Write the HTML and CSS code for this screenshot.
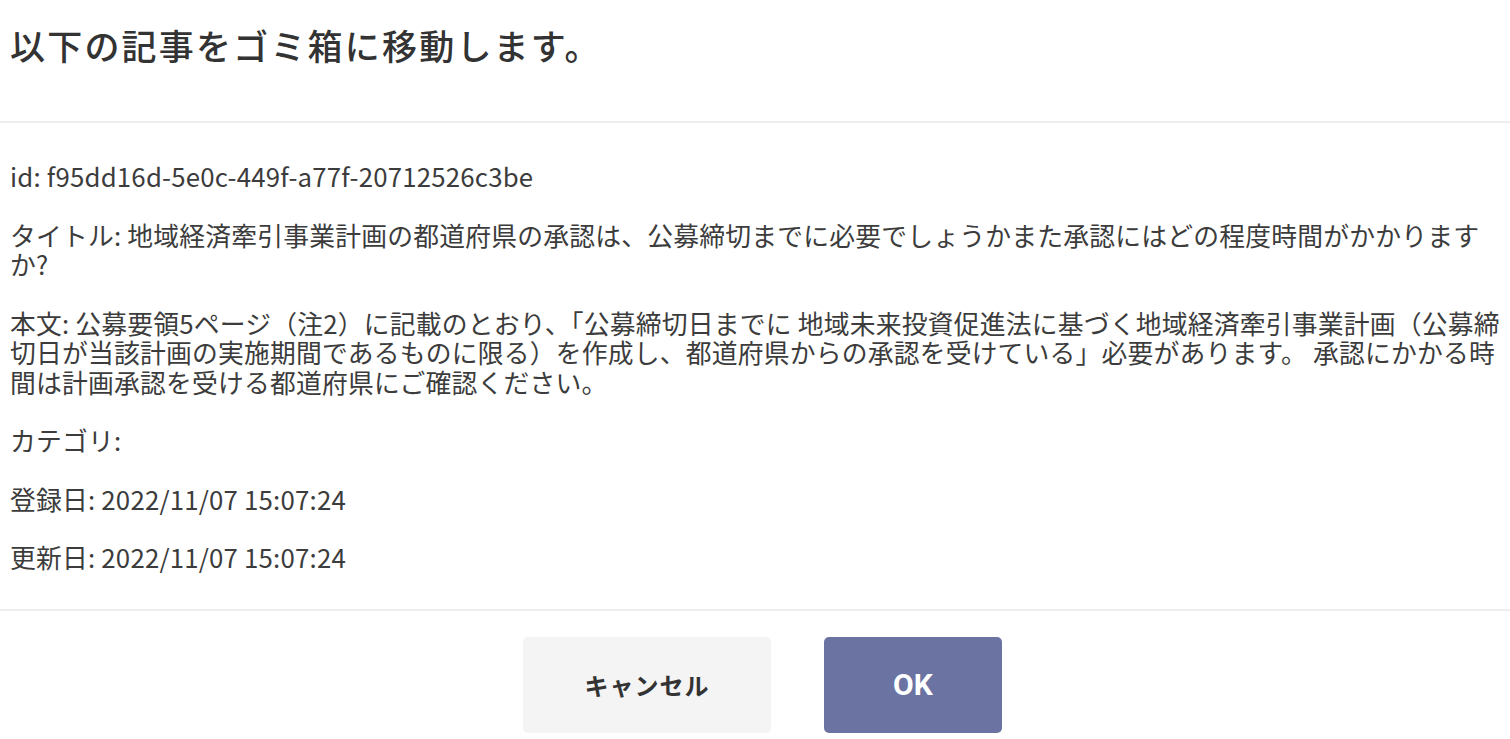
FILE: index.html
```html
<!DOCTYPE html>
<html lang="ja">
<head>
<meta charset="utf-8">
<title>ゴミ箱に移動</title>
<link rel="stylesheet" href="styles.css">
</head>
<body>
<div class="dialog">
  <header class="dialog-header">
    <h1 class="dialog-title">以下の記事をゴミ箱に移動します。</h1>
  </header>
  <section class="dialog-body">
    <p>id: f95dd16d-5e0c-449f-a77f-20712526c3be</p>
    <p>タイトル: 地域経済牽引事業計画の都道府県の承認は、公募締切までに必要でしょうかまた承認にはどの程度時間がかかりますか?</p>
    <p>本文: 公募要領5ページ（注2）に記載のとおり、「公募締切日までに 地域未来投資促進法に基づく地域経済牽引事業計画（公募締切日が当該計画の実施期間であるものに限る）を作成し、都道府県からの承認を受けている」必要があります。 承認にかかる時間は計画承認を受ける都道府県にご確認ください。</p>
    <p>カテゴリ: </p>
    <p>登録日: 2022/11/07 15:07:24</p>
    <p>更新日: 2022/11/07 15:07:24</p>
  </section>
  <footer class="dialog-footer">
    <button class="btn btn-cancel" type="button">キャンセル</button>
    <button class="btn btn-ok" type="button">OK</button>
  </footer>
</div>
</body>
</html>
```
FILE: styles.css
```css
html, body {
  margin: 0;
  padding: 0;
  background: #ffffff;
  overflow: hidden;
}

body {
  font-family: "Noto Sans CJK JP", "Noto Sans", sans-serif;
  color: #333333;
}

.dialog {
  width: 1525px;
  background: #ffffff;
}

.dialog-header {
  padding: 20px 10px 51px;
  border-bottom: 2px solid #eeeeee;
}

.dialog-title {
  margin: 0;
  font-size: 35px;
  line-height: 50px;
  font-weight: 500;
  letter-spacing: 2.2px;
  color: #333333;
}

.dialog-body {
  padding: 9px 10px 8px;
  border-bottom: 2px solid #eeeeee;
}

.dialog-body p {
  margin: 29px 0;
  font-size: 25.8px;
  line-height: 29.5px;
  letter-spacing: 0.2px;
  color: #3c3c3c;
}

.dialog-footer {
  display: flex;
  justify-content: center;
  gap: 53px;
  padding: 26px 10px 20px;
}

.btn {
  height: 96px;
  border: none;
  border-radius: 5px;
  font-family: "Noto Sans CJK JP", sans-serif;
  font-weight: 700;
  cursor: pointer;
}

.btn-cancel {
  width: 248px;
  background: #f4f4f4;
  color: #333333;
  font-size: 24px;
  letter-spacing: 1px;
}

.btn-ok {
  width: 178px;
  background: #6b73a3;
  color: #ffffff;
  font-family: Roboto, "Noto Sans CJK JP", sans-serif;
  font-size: 30px;
}
```
